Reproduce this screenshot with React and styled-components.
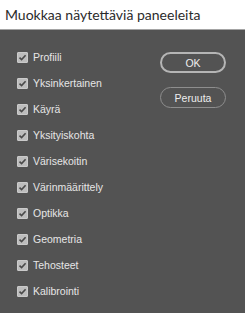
import styled, { createGlobalStyle } from "styled-components";

const Global = createGlobalStyle`
  html, body { margin: 0; padding: 0; background: #535353; }
`;

const Dialog = styled.div`
  width: 245px;
  height: 313px;
  display: flex;
  flex-direction: column;
  overflow: hidden;
`;

const Header = styled.div`
  height: 29px;
  background: #ffffff;
  border-bottom: 1px solid #a4a4a4;
  display: flex;
  align-items: center;
  padding-left: 5px;
  font-family: Lato, "Open Sans", sans-serif;
  font-size: 14px;
  color: #2b2b2b;
`;

const Body = styled.div`
  flex: 1;
  background: #535353;
  display: flex;
  justify-content: space-between;
  padding: 14px 19px 0 17px;
`;

const List = styled.div`
  display: flex;
  flex-direction: column;
`;

const Row = styled.label`
  height: 26px;
  display: flex;
  align-items: center;
  gap: 5px;
  font-family: "Liberation Sans", Arial, sans-serif;
  font-size: 10.5px;
  color: #e6e6e6;
`;

const Box = styled.span`
  width: 11px;
  height: 11px;
  box-sizing: border-box;
  background: #bdbdbd;
  border: 1px solid #cacaca;
  border-radius: 1px;
  display: flex;
  align-items: center;
  justify-content: center;
`;

const Buttons = styled.div`
  display: flex;
  flex-direction: column;
  gap: 14px;
  padding-top: 8px;
`;

const Button = styled.button`
  width: 66px;
  height: 21px;
  border-radius: 11px;
  background: transparent;
  border: ${(p) => (p.primary ? "2px solid #b5b5b5" : "1px solid #8e8e8e")};
  color: #eeeeee;
  font-family: "Liberation Sans", Arial, sans-serif;
  font-size: 10.5px;
  padding: 0;
`;

const items = [
  "Profiili",
  "Yksinkertainen",
  "Käyrä",
  "Yksityiskohta",
  "Värisekoitin",
  "Värinmäärittely",
  "Optikka",
  "Geometria",
  "Tehosteet",
  "Kalibrointi",
];

function Check() {
  return (
    <Box>
      <svg width="9" height="9" viewBox="0 0 9 9">
        <path d="M1.5 4.6 L3.6 6.6 L7.6 2.2" fill="none" stroke="#4a4a4a" strokeWidth="1.6" />
      </svg>
    </Box>
  );
}

export default function App() {
  return (
    <>
      <Global />
      <Dialog>
        <Header>Muokkaa näytettäviä paneeleita</Header>
        <Body>
          <List>
            {items.map((t) => (
              <Row key={t}>
                <Check />
                {t}
              </Row>
            ))}
          </List>
          <Buttons>
            <Button primary>OK</Button>
            <Button>Peruuta</Button>
          </Buttons>
        </Body>
      </Dialog>
    </>
  );
}
